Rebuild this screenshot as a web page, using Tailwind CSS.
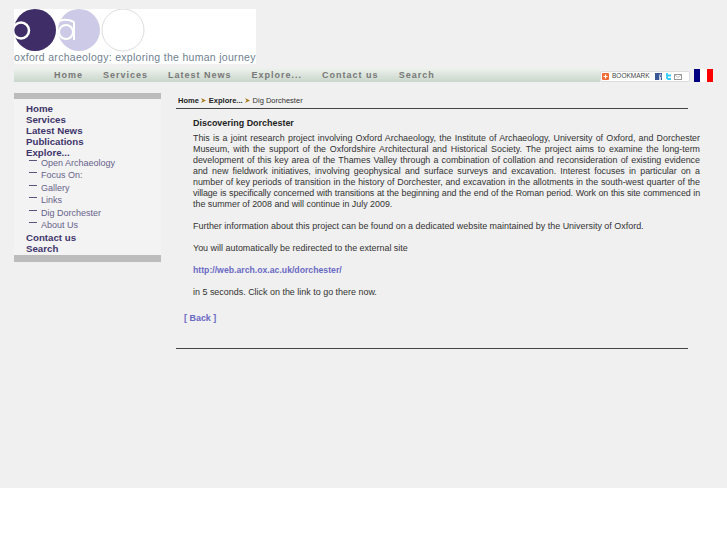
<!DOCTYPE html>
<html lang="en">
<head>
  <meta charset="UTF-8" />
  <title>Oxford Archaeology - Dig Dorchester</title>
  <script src="https://cdn.jsdelivr.net/npm/@tailwindcss/browser@4"></script>
</head>
<body class="bg-white font-['Liberation_Sans',sans-serif] text-[8.95px] text-[#333]">

  <div class="h-[488px] bg-[#f0f0f0] overflow-hidden">

    <!-- Logo -->
    <div class="pt-[9px] pl-[14px] h-[68px]">
      <div class="w-[242px] h-[55px] bg-white overflow-hidden">
        <div class="flex h-[43px]">
          <svg width="146" height="43" viewBox="0 0 146 43">
            <circle cx="21" cy="21" r="21" fill="#3e2d66" />
            <circle cx="7" cy="21.5" r="8" fill="none" stroke="#fff" stroke-width="2.5" />
            <circle cx="65" cy="21" r="21" fill="#cccae6" />
            <circle cx="52" cy="23" r="7" fill="none" stroke="#fff" stroke-width="2" />
            <path d="M60 13v18" stroke="#fff" stroke-width="2" />
            <path d="M46 12q6 -3 14 1" fill="none" stroke="#fff" stroke-width="2" />
            <circle cx="109" cy="21" r="21" fill="#fff" stroke="#dddddd" />
          </svg>
        </div>
        <div class="text-[10.5px] leading-[11px] tracking-[0.3px] text-[#6f7f90] whitespace-nowrap">oxford archaeology: exploring the human journey</div>
      </div>
    </div>

    <!-- Nav -->
    <div class="ml-[14px] h-[14px] flex items-center justify-between bg-gradient-to-b from-[#eef2ee] to-[#c9d6cb]">
      <div class="flex pl-[40px] gap-[20px] -mt-[1px] font-bold text-[9px] tracking-[1px] text-[#777] leading-[12px]">
        <span>Home</span>
        <span>Services</span>
        <span>Latest News</span>
        <span>Explore...</span>
        <span>Contact us</span>
        <span>Search</span>
      </div>
      <div class="flex items-center pr-[14px] bg-[#f0f0f0] self-stretch">
        <div class="w-[90px] h-[11px] mt-[3px] bg-white border border-[#ddd] rounded-[2px] flex items-center pl-[1px] text-[6.5px] leading-none text-[#444]">
          <svg class="mr-[3px]" width="7" height="7" viewBox="0 0 7 7">
            <rect width="7" height="7" rx="1" fill="#f26a35" />
            <path d="M3.5 1.5v4M1.5 3.5h4" stroke="#fff" stroke-width="1.2" />
          </svg>
          <span class="w-[38px]">BOOKMARK</span>
          <svg class="ml-[5px]" width="7" height="7" viewBox="0 0 7 7">
            <rect width="7" height="7" fill="#3b5998" />
            <path d="M5.5 7V4.2h1M5.5 2.2h1M4.6 7V2.4q0 -1.2 1.2 -1.2" fill="none" stroke="#fff" stroke-width="0.8" />
          </svg>
          <svg class="ml-[3px]" width="6" height="7" viewBox="0 0 6 7">
            <path d="M2 0v4.5q0 1.5 1.5 1.5H6M2 2.5h4" fill="none" stroke="#33ccff" stroke-width="1.8" />
          </svg>
          <svg class="ml-[3px]" width="8" height="6" viewBox="0 0 8 6">
            <rect x="0.5" y="0.5" width="7" height="5" fill="#fff" stroke="#999" />
            <path d="M0.5 0.5l3.5 3 3.5 -3" fill="none" stroke="#999" stroke-width="0.7" />
          </svg>
        </div>
        <div class="flex w-[19px] h-[13px] ml-[4px]">
          <span class="flex-1 bg-[#000080]"></span>
          <span class="flex-1 bg-white"></span>
          <span class="flex-1 bg-[#ff0000]"></span>
        </div>
      </div>
    </div>

    <div class="flex pl-[14px] pt-[11px]">

      <!-- Sidebar -->
      <div class="w-[147px] h-[169px] shrink-0 bg-[#f3f3f3] border-t-[6px] border-b-[7px] border-[#bcbcbc] pl-[12px] pt-[4px]">
        <ul class="font-bold text-[9.7px] leading-[11px] text-[#40356a]">
          <li>Home</li>
          <li>Services</li>
          <li>Latest News</li>
          <li>Publications</li>
          <li>Explore...</li>
        </ul>
        <ul class="-mt-[1px] mb-[1px] font-normal text-[9px] leading-[12.4px] text-[#68628a]">
          <li class="flex"><span class="w-[8px] h-px bg-[#5b5580] ml-[3px] mr-[4px] mt-[3px]"></span>Open Archaeology</li>
          <li class="flex"><span class="w-[8px] h-px bg-[#5b5580] ml-[3px] mr-[4px] mt-[3px]"></span>Focus On:</li>
          <li class="flex"><span class="w-[8px] h-px bg-[#5b5580] ml-[3px] mr-[4px] mt-[3px]"></span>Gallery</li>
          <li class="flex"><span class="w-[8px] h-px bg-[#5b5580] ml-[3px] mr-[4px] mt-[3px]"></span>Links</li>
          <li class="flex"><span class="w-[8px] h-px bg-[#5b5580] ml-[3px] mr-[4px] mt-[3px]"></span>Dig Dorchester</li>
          <li class="flex"><span class="w-[8px] h-px bg-[#5b5580] ml-[3px] mr-[4px] mt-[3px]"></span>About Us</li>
        </ul>
        <ul class="font-bold text-[9.7px] leading-[11px] text-[#40356a]">
          <li>Contact us</li>
          <li>Search</li>
        </ul>
      </div>

      <!-- Content -->
      <div class="ml-[15px] w-[512px]">
        <div class="pl-[2px] h-[16px] border-b border-[#444] text-[7.5px] leading-[11px] whitespace-nowrap flex items-center">
          <b class="text-[#222]">Home</b>
          <svg class="ml-[2.5px] mr-[2.5px]" width="5" height="5" viewBox="0 0 5 5"><path d="M0 0l5 2.5L0 5l1.5-2.5z" fill="#a87a1a" /></svg>
          <b class="text-[#222]">Explore...</b>
          <svg class="ml-[2.5px] mr-[2.5px]" width="5" height="5" viewBox="0 0 5 5"><path d="M0 0l5 2.5L0 5l1.5-2.5z" fill="#a87a1a" /></svg>
          <span>Dig Dorchester</span>
        </div>

        <div class="pl-[17px] mr-[-12px] pt-[8px] leading-[11px]">
          <h2 class="font-bold text-[#222] mb-[4px] leading-[12px]">Discovering Dorchester</h2>
          <p class="text-justify text-[8.9px]">This is a joint research project involving Oxford Archaeology, the Institute of Archaeology, University of Oxford, and Dorchester Museum, with the support of the Oxfordshire Architectural and Historical Society. The project aims to examine the long-term development of this key area of the Thames Valley through a combination of collation and reconsideration of existing evidence and new fieldwork initiatives, involving geophysical and surface surveys and excavation. Interest focuses in particular on a number of key periods of transition in the history of Dorchester, and excavation in the allotments in the south-west quarter of the <span class="tracking-[-0.1px]">village is specifically concerned with transitions at the beginning and the end of the Roman period. Work on this site commenced in</span> the summer of 2008 and will continue in July 2009.</p>
          <p class="mt-[11px]">Further information about this project can be found on a dedicated website maintained by the University of Oxford.</p>
          <p class="mt-[11px]">You will automatically be redirected to the external site</p>
          <p class="mt-[11px] font-bold text-[8.7px] text-[#6a6ac4]">http://web.arch.ox.ac.uk/dorchester/</p>
          <p class="mt-[11px]">in 5 seconds. Click on the link to go there now.</p>
        </div>

        <div class="pl-[8px] mt-[15px] font-bold text-[#6a6ac4] leading-[11px]">[ Back ]</div>
        <div class="mt-[24px] border-b border-[#444]"></div>
      </div>
    </div>
  </div>

</body>
</html>
